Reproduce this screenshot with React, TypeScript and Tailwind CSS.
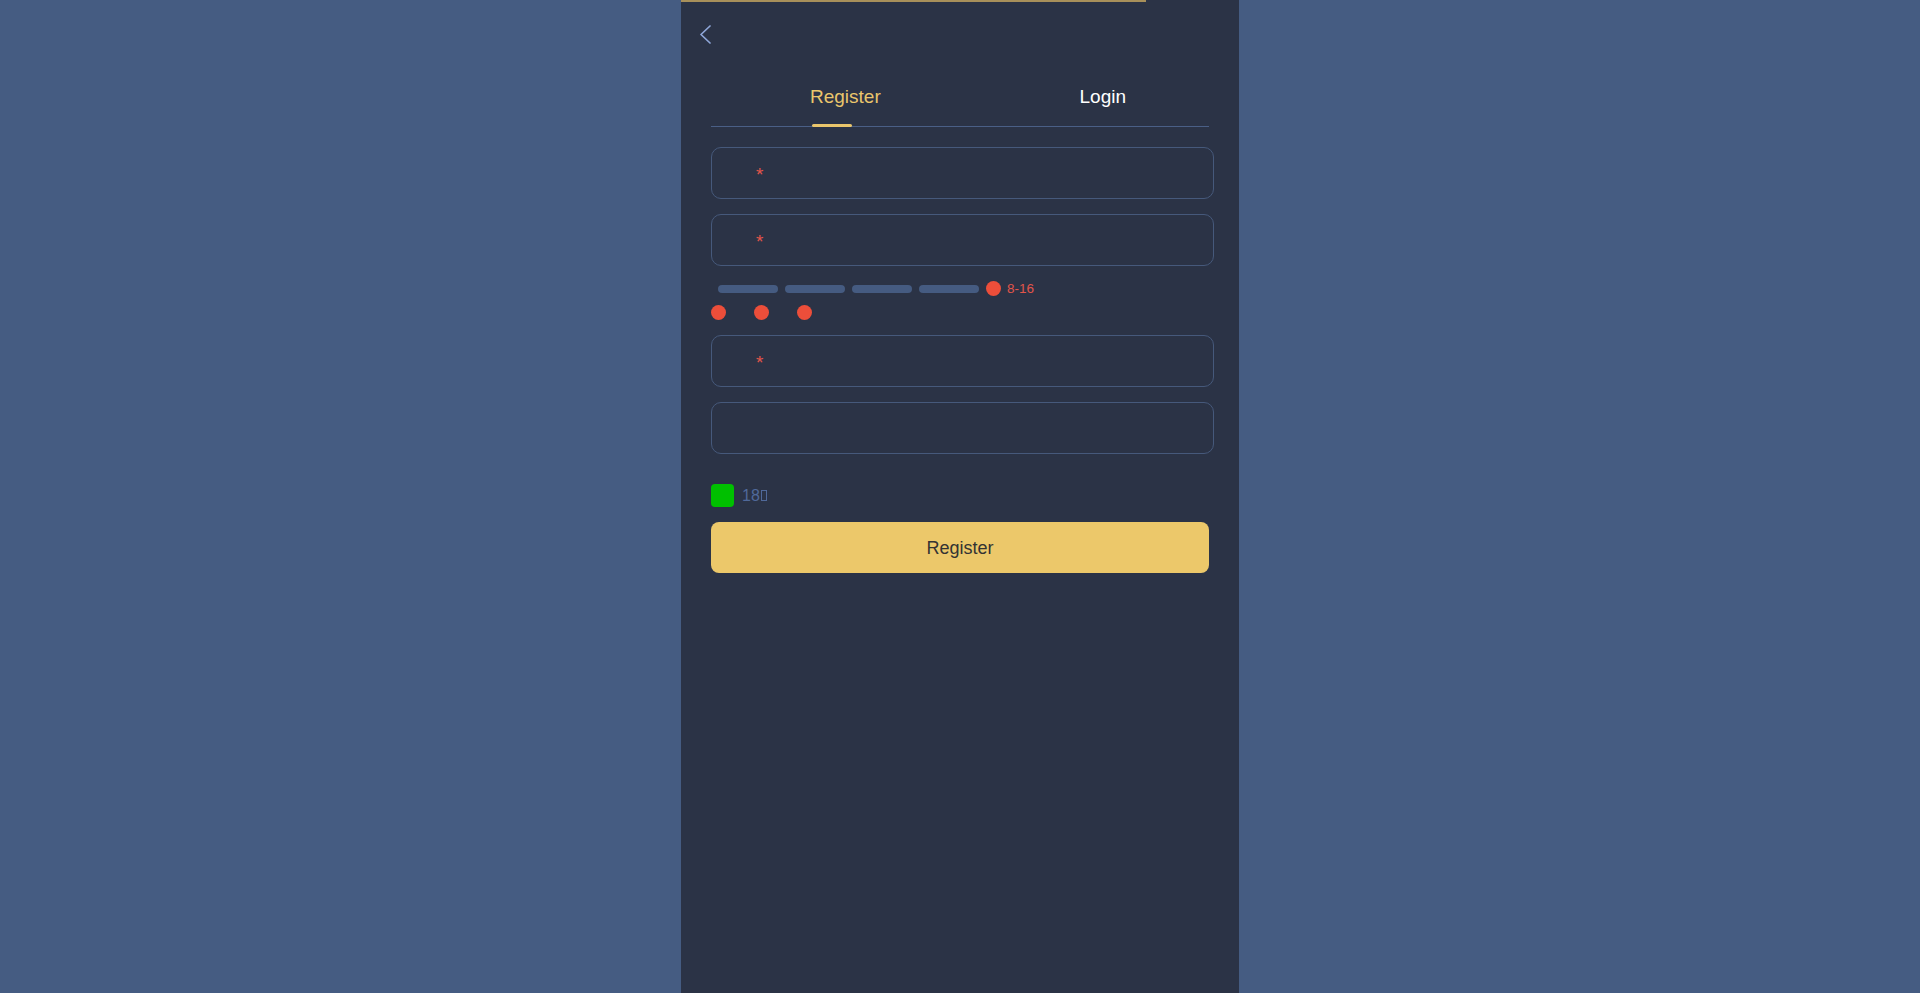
import React from "react";

function Field({ star = true }: { star?: boolean }) {
  return (
    <div className="h-[52px] w-[503px] rounded-[10px] border border-[#46597b] flex items-center pl-[44px]">
      {star && <span className="text-[19px] leading-none text-[#e2554a] pt-[2px]">*</span>}
    </div>
  );
}

export default function App() {
  return (
    <div
      className="min-h-screen w-full flex justify-center bg-[#455c82]"
      style={{ fontFamily: '"Liberation Sans", Arial, sans-serif' }}
    >
      <div className="w-[558px] min-h-[993px] bg-[#2b3346] flex flex-col">
        <div className="h-[2px] w-[465px] bg-[#a8905a]" />
        <div className="h-[64px] flex items-center pl-[18px]">
          <svg width="13" height="19" viewBox="0 0 13 19" fill="none">
            <path d="M11 1 L2 9.5 L11 18" stroke="#8fa7d9" strokeWidth="1.7" strokeLinecap="round" strokeLinejoin="round" />
          </svg>
        </div>
        <div className="px-[30px] flex flex-col">
          <div className="flex border-b border-[#4a5f86] h-[61px]">
            <div className="relative h-[60px] ml-[99px] pt-[19px] text-[19px] leading-[24px] text-[#eac66c]">
              Register
              <div className="absolute left-[2px] bottom-[-1px] h-[3px] w-[40px] rounded-full bg-[#eac66c]" />
            </div>
            <div className="h-[60px] ml-auto mr-[83px] pt-[19px] text-[19px] leading-[24px] text-white">
              Login
            </div>
          </div>

          <div className="mt-[20px] flex flex-col gap-[15px]">
            <Field />
            <Field />
          </div>

          <div className="mt-[15px] h-[15px] flex items-center">
            <div className="flex items-center gap-[7px] pl-[7px]">
              <div className="h-[8px] w-[60px] rounded-full bg-[#455b81]" />
              <div className="h-[8px] w-[60px] rounded-full bg-[#455b81]" />
              <div className="h-[8px] w-[60px] rounded-full bg-[#455b81]" />
              <div className="h-[8px] w-[60px] rounded-full bg-[#455b81]" />
            </div>
            <div className="ml-[7px] h-[15px] w-[15px] rounded-full bg-[#ec4e3a]" />
            <span className="ml-[6px] text-[13.5px] leading-none text-[#e2554a]">8-16</span>
          </div>

          <div className="mt-[9px] flex items-center gap-[28px]">
            <div className="h-[15px] w-[15px] rounded-full bg-[#ec4e3a]" />
            <div className="h-[15px] w-[15px] rounded-full bg-[#ec4e3a]" />
            <div className="h-[15px] w-[15px] rounded-full bg-[#ec4e3a]" />
          </div>

          <div className="mt-[15px] flex flex-col gap-[15px]">
            <Field />
            <Field star={false} />
          </div>

          <div className="mt-[30px] flex items-center">
            <div className="h-[23px] w-[23px] rounded-[4px] bg-[#00c000]" />
            <span className="ml-[8px] text-[16px] leading-none text-[#50699a] flex items-center">
              18
              <span className="ml-[1px] inline-block h-[11px] w-[6px] border border-[#50699a]" />
            </span>
          </div>

          <button className="mt-[15px] h-[51px] w-[498px] rounded-[8px] bg-[#ecc86a] text-[18px] text-[#333333] flex items-center justify-center pt-[1px]">
            Register
          </button>
        </div>
      </div>
    </div>
  );
}
